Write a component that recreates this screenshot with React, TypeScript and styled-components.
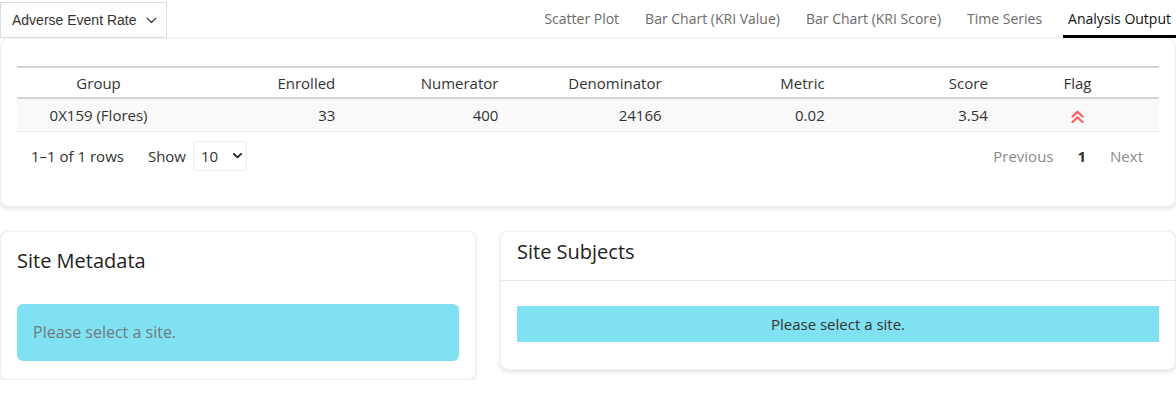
import React from "react";
import styled, { createGlobalStyle } from "styled-components";

const Global = createGlobalStyle`
  html, body { margin: 0; padding: 0; background: #fff; }
  body { font-family: "Open Sans", "Noto Sans", sans-serif; color: #333; font-size: 15px; }
  * { box-sizing: border-box; }
`;

const Page = styled.div`
  width: 1176px;
  display: flex;
  flex-direction: column;
`;

const TopBar = styled.div`
  display: flex;
  justify-content: space-between;
  align-items: stretch;
  height: 38px;
`;

const MetricSelect = styled.div`
  margin-top: 2px;
  width: 167px;
  height: 36px;
  border: 1px solid #dcdcdc;
  display: flex;
  align-items: center;
  padding: 0 8px 0 11px;
  gap: 9px;
  font-family: "Liberation Sans", Arial, sans-serif;
  font-size: 14px;
  color: #333;
  background: #fff;
  white-space: nowrap;
  flex-shrink: 0;
  svg { flex-shrink: 0; }
`;

const Tabs = styled.div`
  display: flex;
  align-items: stretch;
`;

const Tab = styled.div<{ $active?: boolean }>`
  margin-left: 16px;
  padding: 0 5px;
  display: flex;
  align-items: center;
  font-size: 14px;
  color: ${(p) => (p.$active ? "#111" : "#6b6b6b")};
  border-bottom: 3px solid ${(p) => (p.$active ? "#000" : "transparent")};
  padding-top: 2px;
  white-space: nowrap;
`;

const Card = styled.div`
  background: #fff;
  border: 1px solid #efefef;
  border-radius: 8px;
  box-shadow: 0 2px 4px rgba(0, 0, 0, 0.11);
`;

const TableCard = styled(Card)`
  padding: 27px 16px 35px 16px;
`;

const Table = styled.table`
  width: 100%;
  border-collapse: collapse;
  table-layout: fixed;
  border-top: 2px solid #d3d3d3;
`;

const Th = styled.th<{ $align: string }>`
  font-weight: 400;
  text-align: ${(p) => p.$align};
  padding: 4px 8px 3px 8px;
  height: 31px;
  color: #333;
  border-bottom: 2px solid #d3d3d3;
`;

const Td = styled.td<{ $align: string }>`
  text-align: ${(p) => p.$align};
  padding: 0 8px;
  height: 33px;
  background: #f9f9f9;
  border-bottom: 1px solid #ececec;
  color: #333;
  svg { vertical-align: middle; }
`;

const Pager = styled.div`
  display: flex;
  justify-content: space-between;
  align-items: center;
  margin-top: 9px;
  padding: 0 16px 0 14px;
`;

const PagerLeft = styled.div`
  display: flex;
  align-items: center;
  gap: 24px;
`;

const ShowGroup = styled.div`
  display: flex;
  align-items: center;
  gap: 7px;
`;

const PageSize = styled.div`
  width: 54px;
  height: 30px;
  border: 1px solid #ececec;
  border-radius: 3px;
  display: flex;
  align-items: center;
  justify-content: space-between;
  padding: 0 4px 0 7px;
`;

const PagerRight = styled.div`
  display: flex;
  align-items: center;
  gap: 24px;
`;

const PageLink = styled.span<{ $current?: boolean }>`
  color: ${(p) => (p.$current ? "#333" : "#8a8a8a")};
  font-weight: ${(p) => (p.$current ? 700 : 400)};
`;

const Lower = styled.div`
  display: grid;
  grid-template-columns: 476px 1fr;
  gap: 24px;
  margin-top: 24px;
  align-items: start;
`;

const MetaCard = styled(Card)`
  padding: 16px 16px 18px 16px;
`;

const CardTitle = styled.div`
  font-size: 20px;
  line-height: 26px;
  color: #222;
`;

const MetaAlert = styled.div`
  margin-top: 30px;
  background: #80e1f2;
  border-radius: 6px;
  padding: 16px 16px;
  font-size: 16px;
  line-height: 25px;
  color: #6f7a7c;
`;

const SubjHeader = styled.div`
  padding: 7px 16px 15px 16px;
  border-bottom: 1px solid #e8e8e8;
`;

const SubjBody = styled.div`
  padding: 25px 16px 27px 16px;
`;

const SubjAlert = styled.div`
  background: #80e1f2;
  text-align: center;
  font-size: 15px;
  line-height: 20px;
  padding: 8px;
  color: #333;
`;

const Chevron = ({ w = 10, sw = 1.3, color = "#333" }: { w?: number; sw?: number; color?: string }) => (
  <svg width={w} height={w * 0.6} viewBox="0 0 10 6" fill="none">
    <path d="M1 1 L5 5 L9 1" stroke={color} strokeWidth={sw} strokeLinecap="round" strokeLinejoin="round" />
  </svg>
);

const FlagUp = () => (
  <svg width="13" height="14" viewBox="0 0 13 14" fill="none">
    <path d="M1.5 6.5 L6.5 1.8 L11.5 6.5" stroke="#ff5c5c" strokeWidth="2.2" strokeLinecap="round" strokeLinejoin="round" />
    <path d="M1.5 12 L6.5 7.3 L11.5 12" stroke="#ff5c5c" strokeWidth="2.2" strokeLinecap="round" strokeLinejoin="round" />
  </svg>
);

const cols = [
  { h: "Group", a: "center", v: "0X159 (Flores)" },
  { h: "Enrolled", a: "right", v: "33" },
  { h: "Numerator", a: "right", v: "400" },
  { h: "Denominator", a: "right", v: "24166" },
  { h: "Metric", a: "right", v: "0.02" },
  { h: "Score", a: "right", v: "3.54" },
  { h: "Flag", a: "center", v: "flag" },
];

export default function App() {
  return (
    <Page>
      <Global />
      <TopBar>
        <MetricSelect>
          Adverse Event Rate
          <Chevron w={11} sw={1.1} />
        </MetricSelect>
        <Tabs>
          <Tab>Scatter Plot</Tab>
          <Tab>Bar Chart (KRI Value)</Tab>
          <Tab>Bar Chart (KRI Score)</Tab>
          <Tab>Time Series</Tab>
          <Tab $active>Analysis Output</Tab>
        </Tabs>
      </TopBar>
      <TableCard>
        <Table>
          <thead>
            <tr>
              {cols.map((c) => (
                <Th key={c.h} $align={c.a}>
                  {c.h}
                </Th>
              ))}
            </tr>
          </thead>
          <tbody>
            <tr>
              {cols.map((c) => (
                <Td key={c.h} $align={c.a}>
                  {c.v === "flag" ? <FlagUp /> : c.v}
                </Td>
              ))}
            </tr>
          </tbody>
        </Table>
        <Pager>
          <PagerLeft>
            <span>1–1 of 1 rows</span>
            <ShowGroup>
              Show
              <PageSize>
                10
                <Chevron w={9} sw={2} color="#222" />
              </PageSize>
            </ShowGroup>
          </PagerLeft>
          <PagerRight>
            <PageLink>Previous</PageLink>
            <PageLink $current>1</PageLink>
            <PageLink>Next</PageLink>
          </PagerRight>
        </Pager>
      </TableCard>
      <Lower>
        <MetaCard>
          <CardTitle>Site Metadata</CardTitle>
          <MetaAlert>Please select a site.</MetaAlert>
        </MetaCard>
        <Card>
          <SubjHeader>
            <CardTitle>Site Subjects</CardTitle>
          </SubjHeader>
          <SubjBody>
            <SubjAlert>Please select a site.</SubjAlert>
          </SubjBody>
        </Card>
      </Lower>
    </Page>
  );
}
